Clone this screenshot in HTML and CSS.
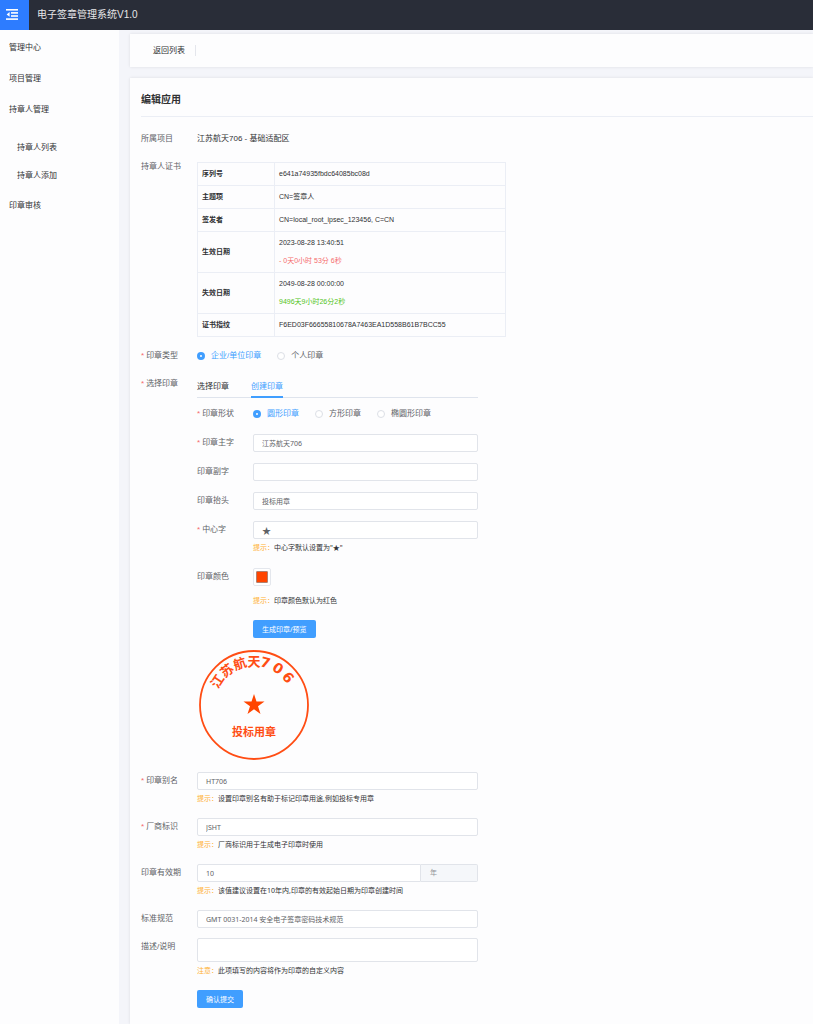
FILE: index.html
```
<!DOCTYPE html>
<html lang="zh-CN">
<head>
  <meta charset="UTF-8">
  <title>电子签章管理系统</title>
  <link rel="stylesheet" href="styles.css">
</head>
<body>
  <header class="header">
    <button class="menu-btn" type="button" aria-label="收起菜单">
      <svg width="12" height="11" viewBox="0 0 12 11" fill="#fff">
        <rect x="0" y="0" width="12" height="1.6"/>
        <rect x="5" y="3.1" width="7" height="1.6"/>
        <rect x="5" y="6.2" width="7" height="1.6"/>
        <rect x="0" y="9.3" width="12" height="1.6"/>
        <path d="M0.6 5.4 L3.6 3.1 V7.7 Z"/>
      </svg>
    </button>
    <h1 class="header-title">电子签章管理系统V1.0</h1>
  </header>

  <div class="layout">
    <nav class="sidebar">
      <a href="#" class="menu-item">管理中心</a>
      <a href="#" class="menu-item">项目管理</a>
      <a href="#" class="menu-item">持章人管理</a>
      <div class="submenu">
        <a href="#" class="submenu-item">持章人列表</a>
        <a href="#" class="submenu-item">持章人添加</a>
      </div>
      <a href="#" class="menu-item">印章审核</a>
    </nav>

    <main class="main">
      <div class="toolbar">
        <a href="#" class="back">返回列表</a>
      </div>

      <section class="card">
        <h2 class="card-title">编辑应用</h2>

        <form class="form">
          <div class="form-row">
            <span class="label">所属项目</span>
            <div class="content">江苏航天706 - 基础适配区</div>
          </div>

          <div class="form-row">
            <span class="label">持章人证书</span>
            <table class="cert">
              <tr><th>序列号</th><td>e641a74935fbdc64085bc08d</td></tr>
              <tr><th>主题项</th><td>CN=签章人</td></tr>
              <tr><th>签发者</th><td>CN=local_root_ipsec_123456, C=CN</td></tr>
              <tr><th>生效日期</th><td><p>2023-08-28 13:40:51</p><p class="red">- 0天0小时 53分 6秒</p></td></tr>
              <tr><th>失效日期</th><td><p>2049-08-28 00:00:00</p><p class="green">9496天9小时26分2秒</p></td></tr>
              <tr><th>证书指纹</th><td>F6ED03F66655810678A7463EA1D558B61B7BCC55</td></tr>
            </table>
          </div>

          <div class="form-row">
            <span class="label required">印章类型</span>
            <div class="content radios">
              <label class="radio"><input type="radio" name="type" checked><span>企业/单位印章</span></label>
              <label class="radio"><input type="radio" name="type"><span>个人印章</span></label>
            </div>
          </div>

          <div class="form-row">
            <span class="label required">选择印章</span>
            <div class="content">
              <div class="tabs">
                <button type="button" class="tab">选择印章</button>
                <button type="button" class="tab active">创建印章</button>
              </div>

              <div class="inner-form">
                <div class="form-row">
                  <span class="label required">印章形状</span>
                  <div class="content radios">
                    <label class="radio"><input type="radio" name="shape" checked><span>圆形印章</span></label>
                    <label class="radio"><input type="radio" name="shape"><span>方形印章</span></label>
                    <label class="radio"><input type="radio" name="shape"><span>椭圆形印章</span></label>
                  </div>
                </div>
                <div class="form-row">
                  <label class="label required" for="main-text">印章主字</label>
                  <div class="content"><input class="input" id="main-text" type="text" value="江苏航天706"></div>
                </div>
                <div class="form-row">
                  <label class="label" for="sub-text">印章副字</label>
                  <div class="content"><input class="input" id="sub-text" type="text"></div>
                </div>
                <div class="form-row">
                  <label class="label" for="head-text">印章抬头</label>
                  <div class="content"><input class="input" id="head-text" type="text" value="投标用章"></div>
                </div>
                <div class="form-row">
                  <label class="label required" for="center-text">中心字</label>
                  <div class="content">
                    <input class="input star-input" id="center-text" type="text" value="★">
                    <p class="hint"><span>提示：</span>中心字默认设置为"★"</p>
                  </div>
                </div>
                <div class="form-row">
                  <label class="label" for="color">印章颜色</label>
                  <div class="content">
                    <input class="color" id="color" type="color" value="#ff4500">
                    <p class="hint"><span>提示：</span>印章颜色默认为红色</p>
                    <button class="btn" type="button">生成印章/预览</button>
                  </div>
                </div>
              </div>

              <svg class="seal" width="110" height="110" viewBox="0 0 110 110">
                <circle cx="55" cy="55" r="54" fill="none" stroke="#ff4d14" stroke-width="1.8"/>
                <g class="seal-arc">
                  <text x="55" y="16" transform="rotate(-57 55 55)">江</text>
                  <text x="55" y="16" transform="rotate(-38 55 55)">苏</text>
                  <text x="55" y="16" transform="rotate(-19 55 55)">航</text>
                  <text x="55" y="16" transform="rotate(0 55 55)">天</text>
                </g>
                <g class="seal-arc seal-digits">
                  <text x="55" y="16" transform="rotate(15 55 55)">7</text>
                  <text x="55" y="16" transform="rotate(33 55 55)">0</text>
                  <text x="55" y="16" transform="rotate(51 55 55)">6</text>
                </g>
                <polygon fill="#ff4500" points="55,44 57.5,51.6 65.5,51.6 59,56.3 61.5,64 55,59.3 48.5,64 51,56.3 44.5,51.6 52.5,51.6"/>
                <text class="seal-head" x="55" y="86">投标用章</text>
              </svg>
            </div>
          </div>

          <div class="form-row">
            <label class="label required" for="alias">印章别名</label>
            <div class="content">
              <input class="input" id="alias" type="text" value="HT706">
              <p class="hint"><span>提示：</span>设置印章别名有助于标记印章用途,例如投标专用章</p>
            </div>
          </div>

          <div class="form-row">
            <label class="label required" for="vendor">厂商标识</label>
            <div class="content">
              <input class="input" id="vendor" type="text" value="JSHT">
              <p class="hint"><span>提示：</span>厂商标识用于生成电子印章时使用</p>
            </div>
          </div>

          <div class="form-row">
            <label class="label" for="years">印章有效期</label>
            <div class="content">
              <div class="input-group">
                <input class="input" id="years" type="text" value="10">
                <span class="append">年</span>
              </div>
              <p class="hint"><span>提示：</span>该值建议设置在10年内,印章的有效起始日期为印章创建时间</p>
            </div>
          </div>

          <div class="form-row">
            <label class="label" for="standard">标准规范</label>
            <div class="content"><input class="input" id="standard" type="text" value="GMT 0031-2014 安全电子签章密码技术规范"></div>
          </div>

          <div class="form-row">
            <label class="label" for="desc">描述/说明</label>
            <div class="content">
              <textarea class="textarea" id="desc"></textarea>
              <p class="hint"><span>注意：</span>此项填写的内容将作为印章的自定义内容</p>
              <button class="btn" type="button">确认提交</button>
            </div>
          </div>
        </form>
      </section>
    </main>
  </div>
</body>
</html>
```

FILE: styles.css
```
* {
  margin: 0;
  padding: 0;
  box-sizing: border-box;
}

body {
  display: flex;
  flex-direction: column;
  min-height: 100vh;
  font-family: "Liberation Sans", "Noto Sans CJK SC", sans-serif;
  font-size: 8px;
  line-height: 18px;
  color: #303133;
  background-color: #f4f5fa;
}

a {
  color: inherit;
  text-decoration: none;
}

button,
input,
textarea {
  font-family: "Noto Sans", "Noto Sans CJK SC", sans-serif;
  font-size: 7px;
  color: #606266;
}

button {
  border: none;
  cursor: pointer;
}

.header {
  display: flex;
  height: 30px;
  background-color: #292d38;
}

.menu-btn {
  display: flex;
  align-items: center;
  justify-content: center;
  width: 29px;
  padding: 0 5px 2px 0;
  background-color: #2d7cff;
}

.header-title {
  padding-left: 8px;
  font-size: 10px;
  font-weight: normal;
  line-height: 29px;
  color: #e6e6e8;
}

.layout {
  display: flex;
  flex: 1;
}

.sidebar {
  display: flex;
  flex-direction: column;
  width: 119px;
  padding-top: 2px;
  background-color: #fdfdfe;
}

.menu-item {
  padding-left: 9px;
  line-height: 31px;
}

.submenu {
  display: flex;
  flex-direction: column;
  padding-top: 9px;
}

.submenu-item {
  padding-left: 17px;
  line-height: 28px;
}

.main {
  display: flex;
  flex: 1;
  flex-direction: column;
  gap: 11px;
  padding: 4px 0 0 11px;
}

.toolbar {
  display: flex;
  align-items: center;
  height: 33px;
  padding-left: 23px;
  background-color: #fdfdfe;
  box-shadow: 0 0 3px rgba(0, 0, 0, 0.1);
}

.back {
  padding-right: 10px;
  line-height: 11px;
  border-right: 1px solid #e4e6ec;
}

.card {
  flex: 1;
  padding-left: 11px;
  background-color: #fdfdfe;
  box-shadow: 0 0 3px rgba(0, 0, 0, 0.1);
}

.card-title {
  padding: 13px 0 7px;
  font-size: 10px;
  border-bottom: 1px solid #ebeef5;
}

.form {
  display: flex;
  flex-direction: column;
  gap: 10px;
  padding: 13px 0 14px;
}

.form-row {
  display: flex;
}

.label {
  flex: none;
  width: 56px;
  color: #606266;
}

.required::before {
  content: "*";
  margin-right: 2px;
  color: #f56c6c;
}

.content {
  flex: 1;
  max-width: 281px;
}

.cert {
  width: 309px;
  margin-top: 4px;
  font-size: 7px;
  border-collapse: collapse;
}

.cert th,
.cert td {
  height: 23px;
  padding: 0 4px;
  text-align: left;
  border: 1px solid #ebeef5;
}

.cert th {
  width: 77px;
}

.cert td p:first-child {
  padding-top: 2px;
}

.cert td p:last-child {
  padding-bottom: 2px;
}

.red {
  color: #f56c6c;
}

.green {
  color: #52c41a;
}

.radios {
  display: flex;
  gap: 16px;
}

.radio {
  display: flex;
  align-items: center;
  gap: 6px;
  height: 18px;
  color: #606266;
}

.radio input {
  width: 8px;
  height: 8px;
  appearance: none;
  background-color: #fff;
  border: 1px solid #dcdfe6;
  border-radius: 50%;
}

.radio input:checked {
  border: 3px solid #409eff;
}

.radio input:checked + span {
  color: #409eff;
}

.tabs {
  display: flex;
  gap: 22px;
  height: 23px;
  border-bottom: 1px solid #dfe4ed;
}

.tab {
  height: 23px;
  font-size: 8px;
  color: #303133;
  background: none;
  border-bottom: 2px solid transparent;
}

.tab.active {
  color: #409eff;
  border-bottom-color: #409eff;
}

.inner-form {
  display: flex;
  flex-direction: column;
  gap: 11px;
  padding-top: 7px;
}

.input,
.textarea {
  display: block;
  width: 100%;
  height: 18px;
  padding: 0 8px;
  background-color: #fff;
  border: 1px solid #e1e4ea;
  border-radius: 2px;
  outline: none;
}

.star-input {
  font-size: 9px;
}

.textarea {
  height: 24px;
  resize: none;
}

.hint {
  font-family: "Noto Sans", "Noto Sans CJK SC", sans-serif;
  font-size: 7px;
}

.hint span {
  color: #ffb02e;
}

.color {
  display: block;
  width: 18px;
  height: 18px;
  padding: 2px;
  margin-bottom: 6px;
  background-color: #fff;
  border: 1px solid #e4e7ed;
  border-radius: 2px;
}

.color::-webkit-color-swatch-wrapper {
  padding: 0;
}

.color::-webkit-color-swatch {
  border: 1px solid #b08070;
  border-radius: 1px;
}

.btn {
  display: block;
  height: 18px;
  margin-top: 10px;
  padding: 0 9px;
  color: #fff;
  background-color: #409eff;
  border-radius: 2px;
}

.seal {
  display: block;
  margin: 12px 0 2px 2px;
}

.seal text {
  font-family: "Noto Sans CJK SC", sans-serif;
  font-weight: bold;
  text-anchor: middle;
  fill: #ff4d14;
}

.seal-arc text {
  font-size: 13px;
}

.seal .seal-digits text {
  font-family: "DejaVu Sans", sans-serif;
  font-size: 14px;
}

.seal .seal-head {
  font-size: 11px;
}

.input-group {
  display: flex;
}

.input-group .input {
  flex: 1;
  border-radius: 2px 0 0 2px;
}

.append {
  width: 57px;
  padding-left: 9px;
  font-size: 7px;
  line-height: 16px;
  color: #909399;
  background-color: #f5f7fa;
  border: 1px solid #e1e4ea;
  border-left: none;
  border-radius: 0 2px 2px 0;
}
```
